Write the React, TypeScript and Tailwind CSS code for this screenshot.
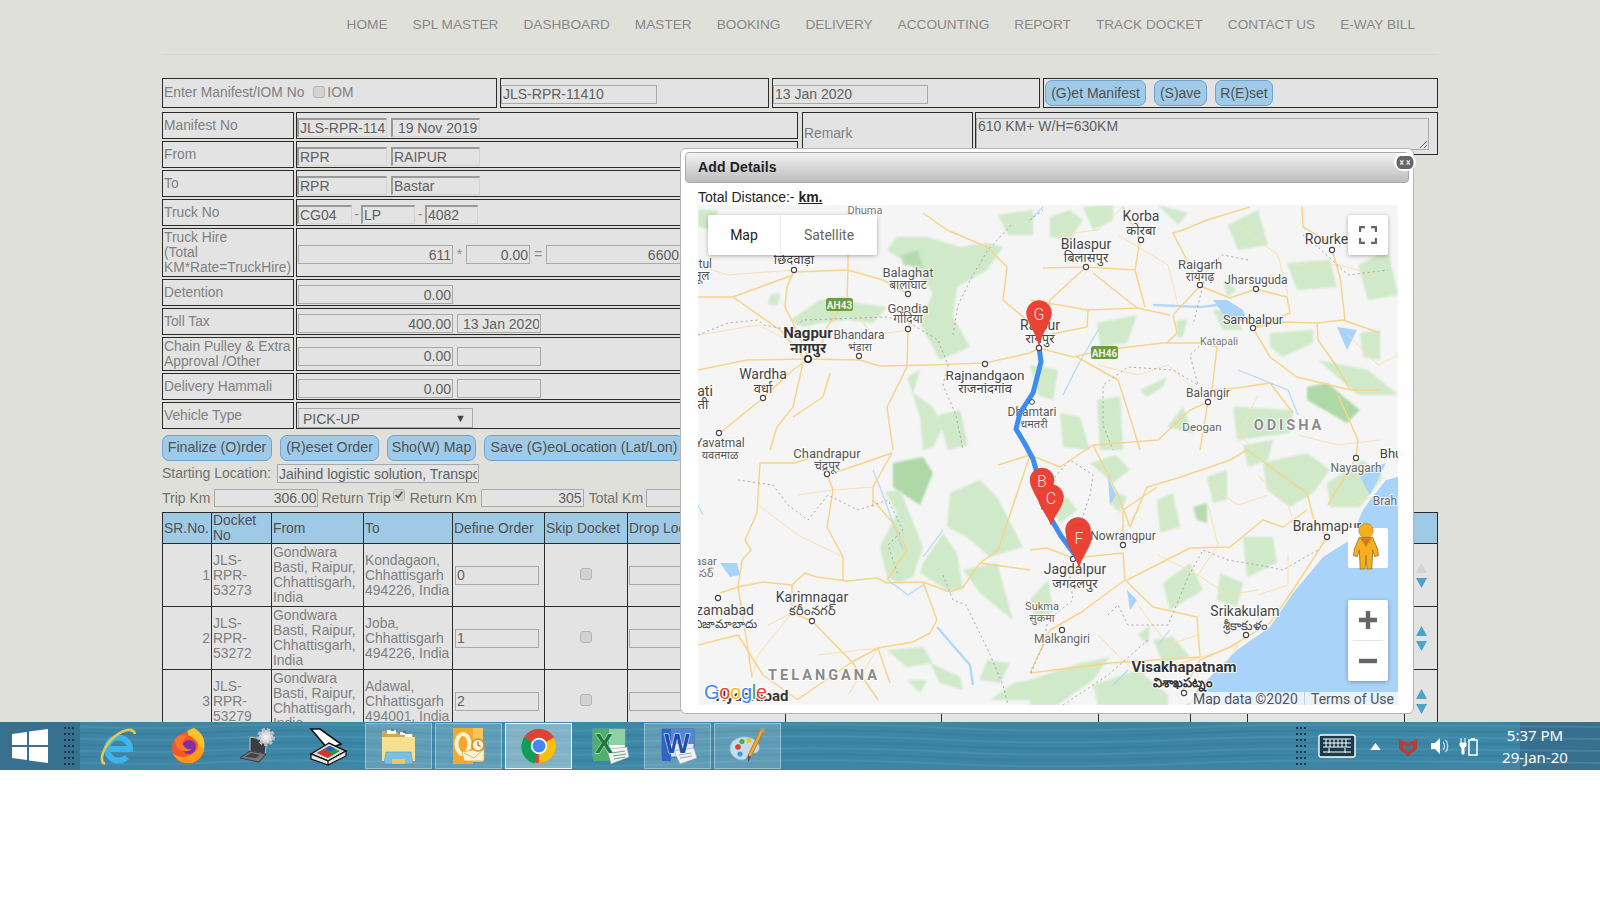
import React from "react";

const NAV = ["HOME","SPL MASTER","DASHBOARD","MASTER","BOOKING","DELIVERY","ACCOUNTING","REPORT","TRACK DOCKET","CONTACT US","E-WAY BILL"];

function Cell({ className = "", children }: { className?: string; children?: React.ReactNode }) {
  return <div className={"border border-[#2b2b2b] bg-[#e3e3e3] " + className}>{children}</div>;
}
function Inp({ v = "", w, right, inset, h = "h-[19px]", extra = "" }: { v?: string; w: string; right?: boolean; inset?: boolean; h?: string; extra?: string }) {
  return (
    <input readOnly value={v} className={`${w} ${h} ${extra} shrink-0 bg-[#e3e3e3] text-[#606060] text-[14px] leading-none px-[1px] outline-none ${right ? "text-right" : "text-left"} ${inset ? "pb-[1px] border-t-2 border-l-2 border-r border-b border-t-[#999] border-l-[#999] border-r-[#d4d4d4] border-b-[#d4d4d4]" : "border border-[#a9a9a9]"}`} />
  );
}
function Btn({ w, t = "text-[14px]", children }: { w: string; t?: string; children: React.ReactNode }) {
  return <button className={`${w} ${t} h-[26px] shrink-0 rounded-[7px] border border-[#6ea4d2] bg-[#9fcbe8] text-[#505050] whitespace-nowrap`}>{children}</button>;
}
function Check({ checked }: { checked?: boolean }) {
  return (
    <span className="inline-flex items-center justify-center w-[12px] h-[12px] rounded-[3px] border border-[#b5b5b5] bg-[#d2d2d2] shrink-0">
      {checked && <svg viewBox="0 0 12 12" className="w-[10px] h-[10px]"><path d="M2 6l3 3 5-7" fill="none" stroke="#555" strokeWidth="2" /></svg>}
    </span>
  );
}
function Row({ label, h = "h-[27px]", children }: { label: React.ReactNode; h?: string; children?: React.ReactNode }) {
  return (
    <div className={`flex gap-[2px] ${h}`}>
      <Cell className="w-[132px] shrink-0 flex items-center px-[1px] text-[#808080] text-[13.8px] leading-[15px] whitespace-nowrap"><div>{label}</div></Cell>
      <Cell className="w-[502px] flex items-center pt-[4px] pl-[1px] text-[#8a8a8a] text-[14px]">{children}</Cell>
    </div>
  );
}
const Tri = ({ up, c }: { up?: boolean; c: string }) => (
  <svg viewBox="0 0 10 9" className="w-[11px] h-[10px] block"><path d={up ? "M5 0l5 9H0z" : "M5 9l5-9H0z"} fill={c} /></svg>
);

const RD = [
  ["1","JLS-RPR-53273","Kondagaon, Chhattisgarh 494226, India","0","#d2d2d2","#4aa3c9"],
  ["2","JLS-RPR-53272","Joba, Chhattisgarh 494226, India","1","#4aa3c9","#4aa3c9"],
  ["3","JLS-RPR-53279","Adawal, Chhattisgarh 494001, India","2","#4aa3c9","#4aa3c9"],
];

/* ---------- map data ---------- */
const ROADS = [
  "0,165 49,155 109,154 162,155 182,161 232,160 287,158 332,148 341,143 375,152 406,145 465,138 502,138",
  "96,65 89,82 87,102 95,118 110,152","150,62 149,95 129,122 119,152","0,92 35,92 82,125 105,152","35,92 95,70",
  "95,67 150,65 185,75 209,88","150,5 150,62","225,8 249,25 289,42 309,62 305,95 332,118",
  "210,125 209,162 189,202 195,245","65,193 95,165 109,155","22,228 65,193","105,158 95,202 79,222 72,245","132,168 125,192 95,212",
  "388,62 352,95 341,142","388,62 437,65 442,35 425,2","345,63 388,62","395,68 439,103 472,110","437,65 447,102","332,95 390,105 439,103","390,105 389,122 349,130",
  "475,110 502,81 532,93 558,84 589,92 592,108 555,123","475,110 479,128 469,138","502,81 475,28 485,25 509,15 552,2",
  "501,138 519,142 514,185 510,197 502,245","555,123 585,117 619,118 645,115 682,128","555,123 572,152 599,172 652,185 682,185",
  "634,45 642,72 647,115","604,2 605,22 632,38","619,118 620,135 639,162 652,185","420,175 379,152","420,175 435,222 442,245","514,185 539,183 572,178 595,208",
  "194,248 139,267 129,269","62,258 97,258 115,252 159,248","62,258 59,308 47,335 53,345 44,355 40,382",
  "40,382 65,377 94,380 107,368 119,372 149,376 179,373 189,378 225,377 252,387 265,382 282,358 332,365",
  "225,377 239,415 232,428 215,437 180,443 154,457 99,495","129,269 135,285 129,322 145,352 145,375","175,295 195,318 209,345 189,375",
  "194,248 175,282 175,302","40,382 49,438 54,472","114,416 154,457 180,495","180,443 192,478","22,388 40,382","94,380 94,408 114,416",
  "332,345 349,343 375,353","375,353 425,348 427,375 455,402 499,412 502,452","425,342 425,305 459,282",
  "432,322 449,282 480,273 532,255 549,245 609,288 615,312 629,332","629,332 619,348 595,385 572,418 532,442 502,455 485,485",
  "492,343 532,342 565,315 585,322 609,305","492,343 429,375","427,375 382,408 352,425 332,468","332,468 412,458 502,452",
  "332,250 362,262 395,240 460,235 492,205 510,197","395,240 420,290 432,322","640,190 660,235 658,253 630,300","0,440 40,430 65,470 100,495","300,260 332,250 300,345 282,358",
];
const THIN = [
  "0,60 30,70 96,65","0,130 60,120 100,140","150,100 175,130 210,125","60,300 100,330 145,352","100,290 135,285 175,282","70,420 94,408 60,450 54,472",
  "120,450 180,443 150,490","360,30 400,25 425,2","400,160 440,170 470,160 510,197","560,190 540,230 560,245","600,230 640,240 682,235",
  "510,280 540,300 570,290","400,430 440,470 502,452","480,460 540,440 520,470","560,390 590,380 590,350","445,300 420,330","680,290 650,300",
  "460,350 500,370 530,390 560,385","440,400 470,440 500,430","510,300 520,340 500,370","560,270 590,300 600,330","420,30 470,60 480,100","540,20 580,50 590,90","650,130 680,160 700,150","600,60 640,60 680,70",
];
const BORDERS = [
  "0,130 30,118 60,115 66,120 92,125 105,115 160,113 190,112 215,120 240,135 250,160 245,180 258,210 265,245",
  "313,20 290,45 275,70 260,100 255,130","40,275 75,280 90,300 110,315 130,290 160,305 190,295 205,325 190,340 200,370",
  "245,370 255,395 268,400 285,435 290,445 305,480 310,500","332,15 345,5","350,280 372,255 395,270 392,290 382,320 372,370 375,395 350,415 345,440 332,470",
  "410,410 420,400 430,420 470,420 490,372 505,345 530,355 560,360 585,365 620,345","505,138 492,150 500,180 475,165 430,162 405,180 405,220 415,245",
  "550,55 525,50 510,60 495,120","605,30 620,42 650,70 690,65","365,500 410,470 450,435",
];
const GREEN: [string, string?][] = [
  ["229,32 262,42 289,38 305,42 289,65 259,82 255,112 272,142 242,155 222,118 235,88 215,62 189,45 199,32"],["204,50 220,45 225,62 205,60","#b5dcae"],
  ["92,115 122,95 145,92 159,98 189,102 175,118 149,115 122,118 105,122"],["209,172 222,165 215,188 235,202 245,222 235,242 225,245 222,212"],
  ["72,90 82,88 80,100 70,100"],["195,258 225,252 235,268 222,300 195,282","#aed9a6"],["187,287 202,285 225,342 215,372 199,378 189,372 182,342 199,308"],
  ["252,288 282,275 299,292 325,342 292,352 269,332 249,322"],["225,358 245,328 259,348 265,385 249,385 222,368"],["265,365 299,358 315,415 282,388"],
  ["189,445 225,442 235,458 209,462"],["209,475 229,475 222,488"],["232,458 262,472 265,485 242,478"],["289,455 312,458 302,478 282,475"],["315,478 332,475 332,495 292,495"],
  ["332,475 382,458 412,452 395,475 359,500 332,500"],["455,435 475,432 492,452 465,458"],["412,285 429,292 422,308 412,298"],["459,295 475,288 482,322 462,328"],
  ["495,302 509,298 509,318 499,315","#b5dcae"],["509,272 529,265 529,295 515,298"],["545,332 575,332 579,358 549,372"],["465,378 492,358 505,385 472,405"],
  ["522,368 545,378 539,402 519,395"],["565,258 609,248 632,265 615,288 592,302 569,285"],["629,278 665,255 685,272 662,302 632,302"],["352,298 369,292 379,305 362,318"],
  ["352,12 372,5 385,15 372,35 352,32"],["385,2 415,0 415,15 395,25"],["399,118 439,110 429,138 402,142"],["479,115 489,115 485,132 479,132"],["525,75 539,85 529,92"],
  ["515,105 532,105 545,125 525,125"],["589,58 632,55 639,82 599,85"],["572,128 615,125 615,138 585,152 572,142"],["609,182 629,178 662,205 649,218 609,195","#aed9a6"],
  ["535,202 595,205 592,228 539,235"],["662,128 682,125 682,155 665,152"],["399,195 422,192 425,245 402,245"],["362,208 382,212 392,245 365,242"],["469,222 485,202 495,228"],
  ["442,185 469,172 465,182 449,192"],["392,258 415,278 432,265 418,250"],["300,10 335,5 335,30 310,30"],["0,5 20,5 15,25 0,22"],["440,430 452,420 450,440"],["660,60 690,45 700,90 670,95"],
  ["620,155 670,165 700,190 660,190"],["460,0 490,8 480,20"],["530,20 560,5 570,40 540,45"],["332,395 350,375 355,405 340,420"],["332,160 360,165 355,195 340,190"],
  ["240,210 262,205 270,240 250,245"],["545,240 575,235 570,255 550,262"],["395,480 440,465 470,490 470,500 400,500"],
];
const LABELS: [string, number, number, number?, number?, string?][] = [
  ["Dhuma",167,5,11,400,"#777"],["Balaghat",210,67,13,400,"#555"],["बालाघाट",210,80,12,400,"#555"],["Gondia",210,103,13,400,"#555"],["गोंदिया",210,114,12,400,"#555"],
  ["Nagpur",110,128,15,700,"#333"],["नागपुर",110,143,14,700,"#333"],["Bhandara",161,130,12,400,"#555"],["भंडारा",162,142,11,400,"#555"],
  ["Wardha",65,169,14,400,"#444"],["वर्धा",65,183,13,400,"#444"],["Rajnandgaon",287,170,13.5,400,"#444"],["राजनांदगांव",287,183,13,400,"#444"],
  ["छिंदवाड़ा",96,54,13,400,"#444"],["etul",4,59,12,400,"#555"],["तूल",4,71,12,400,"#555"],["ati",7,186,14,400,"#444"],["ती",5,199,13,400,"#444"],
  ["Yavatmal",22,238,12,400,"#555"],["यवतमाळ",22,250,11,400,"#555"],["Chandrapur",129,248,13,400,"#555"],["चंद्रपूर",129,261,12,400,"#555"],
  ["Raipur",342,120,14,400,"#444"],["रायपुर",342,133,13,400,"#444"],
  ["Dhamtari",334,207,12,400,"#555"],["धमतरी",336,219,11,400,"#555"],["Korba",443,11,14,400,"#444"],["कोरबा",443,25,13,400,"#444"],
  ["Bilaspur",388,39,14,400,"#444"],["बिलासपुर",388,52,13,400,"#444"],["Raigarh",502,59,13,400,"#555"],["रायगढ़",502,72,12,400,"#555"],
  ["Jharsuguda",558,75,12,400,"#555"],["Sambalpur",555,114,12.5,400,"#444"],["Katapali",521,136,10.5,400,"#777"],["Balangir",510,188,12,400,"#555"],["Deogan",504,222,11.5,400,"#666"],
  ["Rourkela",634,34,14,400,"#444"],["zamabad",27,405,14,400,"#444"],["నిజామాబాదు",27,419,12,400,"#444"],["asar",8,356,11,400,"#666"],["సర్",8,368,11,400,"#666"],
  ["Karimnagar",114,392,14,400,"#444"],["కరీంనగర్",114,405,13,400,"#444"],["Nowrangpur",425,331,12,400,"#555"],["Jagdalpur",377,364,14,400,"#444"],["जगदलपुर",377,378,13,400,"#444"],
  ["Sukma",344,401,11,400,"#666"],["सुकमा",344,413,11,400,"#666"],["Malkangiri",364,434,12,400,"#666"],["Srikakulam",547,406,14,400,"#444"],["శ్రీకాకుళం",547,420,13,400,"#444"],
  ["Visakhapatnam",486,462,15,700,"#333"],["విశాఖపట్నం",485,477,13,700,"#333"],["Brahmapur",629,321,14,400,"#444"],["Nayagarh",658,263,12,400,"#666"],["Brah",687,296,12,400,"#666"],["Bhu",693,248,13,400,"#444"],
  ["Hyderabad",54,491,15,700,"#333"],
];
const DOTS: [number, number][] = [[210,89],[210,124],[161,151],[65,193],[287,159],[96,65],[21,228],[129,269],[443,35],[388,62],[502,80],[558,84],[555,123],[510,197],[634,45],[20,393],[114,416],[425,340],[375,354],[364,425],[548,430],[486,488],[629,332],[658,253]];

function Pin({ x, y, tip, r = 12, l }: { x: number; y: number; tip: number; r?: number; l: string }) {
  return (
    <g>
      <path d={`M${x} ${tip}C${x - 2} ${y + r + 8} ${x - r} ${y + r * 0.75} ${x - r} ${y}A${r} ${r} 0 1 1 ${x + r} ${y}C${x + r} ${y + r * 0.75} ${x + 2} ${y + r + 8} ${x} ${tip}Z`} fill="#ea4335" stroke="#d23a2d" strokeWidth="0.5" />
      {l && <text x={x} y={y + 1} fontSize="16" fontWeight="300" fill="#f9dcd8" textAnchor="middle" dominantBaseline="central" fontFamily="Roboto, sans-serif">{l}</text>}
    </g>
  );
}

function MapArt() {
  return (
    <svg viewBox="0 0 700 500" className="absolute inset-0 w-[700px] h-[500px]">
      <defs><filter id="soft"><feGaussianBlur stdDeviation="0.8" /></filter></defs>
      <rect width="700" height="500" fill="#f5f5f5" />
      <g filter="url(#soft)">
        {GREEN.map(([p, c], i) => <polygon key={i} points={p} fill={c || "#cfe9c9"} />)}
      </g>
      <polygon points="700,272 688,275 672,295 665,305 652,335 625,352 595,388 572,422 539,445 499,485 489,500 700,500" fill="#a9d3f9" />
      {["515,95 529,95 545,105 549,115 532,118","639,122 659,125 649,145","22,358 39,358 42,370 32,372","429,385 439,395 432,405","410,272 418,290 412,300","662,272 676,262 688,258 672,290"].map((p, i) => <polygon key={i} points={p} fill="#a9d3f9" />)}
      {["455,100 502,102 520,100","239,422 272,460 275,480","190,375 210,390 225,380","225,352 245,325","460,440 472,425","332,15 345,2","540,165 590,185 600,210","0,300 5,310","205,345 185,290 175,265","400,125 380,160 365,190","415,480 430,465"].map((p, i) => <polyline key={i} points={p} fill="none" stroke="#b4d9f7" strokeWidth={i < 2 ? 2.5 : 1.2} />)}
      {THIN.map((p, i) => <polyline key={i} points={p} fill="none" stroke="#f9e2ae" strokeWidth="1" />)}
      {ROADS.map((p, i) => <polyline key={i} points={p} fill="none" stroke="#f8d48a" strokeWidth="1.5" strokeLinejoin="round" />)}
      {BORDERS.map((p, i) => <polyline key={i} points={p} fill="none" stroke="#a8a8a8" strokeWidth="1" strokeDasharray="2 3" />)}
      <g>
        <rect x="128" y="93" width="27" height="13" rx="2.5" fill="#6a9d3e" />
        <text x="141.5" y="100" fontSize="10" fontWeight="700" fill="#eef5e5" textAnchor="middle" dominantBaseline="central" fontFamily="Roboto, sans-serif">AH43</text>
        <rect x="393" y="141" width="27" height="13" rx="2.5" fill="#6a9d3e" />
        <text x="406.5" y="148" fontSize="10" fontWeight="700" fill="#eef5e5" textAnchor="middle" dominantBaseline="central" fontFamily="Roboto, sans-serif">AH46</text>
      </g>
      {DOTS.map(([x, y], i) => <circle key={i} cx={x} cy={y} r="2.6" fill="#fff" stroke="#444" strokeWidth="1.1" />)}
      <circle cx="110" cy="154" r="3.2" fill="#fff" stroke="#222" strokeWidth="1.6" />
      <text x="591" y="220" fontSize="14.5" fontWeight="700" letterSpacing="3" fill="#8a8a8a" stroke="#fff" strokeWidth="2" paintOrder="stroke" textAnchor="middle" dominantBaseline="central" fontFamily="Roboto, sans-serif">ODISHA</text>
      <text x="126" y="470" fontSize="14.5" fontWeight="700" letterSpacing="3" fill="#8a8a8a" stroke="#fff" strokeWidth="2" paintOrder="stroke" textAnchor="middle" dominantBaseline="central" fontFamily="Roboto, sans-serif">TELANGANA</text>
      {LABELS.map(([t, x, y, s = 13, w = 400, c = "#555"], i) => (
        <text key={i} x={x} y={y} fontSize={s} fontWeight={w} fill={c} stroke="#fff" strokeWidth="2" strokeOpacity="0.8" paintOrder="stroke" textAnchor="middle" dominantBaseline="central" fontFamily="Roboto, 'Noto Sans', sans-serif">{t}</text>
      ))}
      <polyline points="341,142 343,157 335,188 322,208 318,224 327,239 335,254 341,275 348,305 363,331 380,354" fill="none" stroke="#3d8cf0" strokeWidth="5" strokeLinejoin="round" strokeLinecap="round" />
      <circle cx="341" cy="143" r="2.6" fill="#fff" stroke="#444" strokeWidth="1.1" />
      <circle cx="334" cy="197" r="2.4" fill="#fff" stroke="#444" strokeWidth="1" />
      <Pin x={341} y={108} tip={141} r={12.5} l="G" />
      <Pin x={344} y={275} tip={305} r={12} l="B" />
      <Pin x={353} y={292} tip={320} r={12.5} l="C" />
      <Pin x={380} y={325} tip={358} r={12.5} l="" />
      <Pin x={381} y={332} tip={363} r={12.5} l="F" />
      <text x="6" y="494" fontSize="20" fontWeight="500" stroke="#fff" strokeWidth="2.5" paintOrder="stroke" fontFamily="'Liberation Sans', sans-serif" letterSpacing="-0.3">
        <tspan fill="#4285f4">G</tspan><tspan fill="#ea4335">o</tspan><tspan fill="#fbbc05">o</tspan><tspan fill="#4285f4">g</tspan><tspan fill="#34a853">l</tspan><tspan fill="#ea4335">e</tspan>
      </text>
    </svg>
  );
}

function MapBox() {
  return (
    <div className="relative w-[700px] h-[500px] ml-[13px] overflow-hidden [font-family:Roboto,sans-serif]">
      <MapArt />
      <div className="absolute left-[10px] top-[10px] w-[169px] h-[40px] flex bg-white rounded-[2px] shadow-[0_1px_4px_rgba(0,0,0,0.3)] text-[14px]">
        <div className="w-[73px] flex items-center justify-center text-[#222] border-r border-[#eee]">Map</div>
        <div className="flex-1 flex items-center justify-center text-[#666]">Satellite</div>
      </div>
      <div className="absolute left-[650px] top-[10px] w-[40px] h-[40px] bg-white rounded-[2px] shadow-[0_1px_4px_rgba(0,0,0,0.3)] flex items-center justify-center">
        <svg viewBox="0 0 18 18" className="w-[18px] h-[18px]"><path d="M1 6V1h5M12 1h5v5M17 12v5h-5M6 17H1v-5" fill="none" stroke="#666" strokeWidth="2.4" /></svg>
      </div>
      <div className="absolute left-[650px] top-[323px] w-[40px] h-[40px] bg-white rounded-[2px]" />
      <svg viewBox="0 0 30 50" className="absolute left-[653px] top-[317px] w-[30px] h-[48px]">
        <circle cx="15" cy="9" r="7.5" fill="#f6b01e" stroke="#a67a1c" strokeWidth="0.6" />
        <path d="M8 16h14l5 12 1 7-4 1-2-7-1 20h-5l-1-14-1 14H9L8 29l-2 7-4-1 1-7z" fill="#f6b01e" stroke="#8b6a20" strokeWidth="0.8" />
        <path d="M9 17h12l-6 9z" fill="#d9781f" />
      </svg>
      <div className="absolute left-[650px] top-[395px] w-[40px] h-[81px] bg-white rounded-[2px] shadow-[0_1px_4px_rgba(0,0,0,0.3)] flex flex-col items-center">
        <div className="h-[40px] flex items-center justify-center">
          <svg viewBox="0 0 18 18" className="w-[18px] h-[18px]"><path d="M9 0v18M0 9h18" stroke="#666" strokeWidth="4.4" /></svg>
        </div>
        <div className="w-[30px] h-px bg-[#e6e6e6]" />
        <div className="h-[40px] flex items-center justify-center">
          <svg viewBox="0 0 18 18" className="w-[18px] h-[18px]"><path d="M0 9h18" stroke="#666" strokeWidth="4.4" /></svg>
        </div>
      </div>
      <div className="absolute left-[491px] top-[487px] w-[209px] h-[13px] bg-[rgba(255,255,255,0.72)] flex items-center text-[#555] text-[14px] leading-none whitespace-nowrap">
        <span className="pl-[4px] w-[115px]">Map data ©2020</span>
        <span className="border-l border-[#ccc] pl-[6px] h-[13px] flex items-center">Terms of Use</span>
      </div>
    </div>
  );
}

function Grip() {
  return <div className="grid grid-cols-3 gap-x-[2px] gap-y-[4px] w-[10px]">{Array.from({ length: 21 }).map((_, i) => <span key={i} className="w-[2px] h-[2px] bg-[#1d3443]" />)}</div>;
}
const Tile = ({ children, on }: { children: React.ReactNode; on?: boolean }) => (
  <div className={`w-[67px] h-[46px] mr-[3px] shrink-0 flex items-center justify-center border ${on ? "bg-[rgba(255,255,255,0.36)] border-[rgba(255,255,255,0.9)]" : "bg-[rgba(255,255,255,0.18)] border-[rgba(255,255,255,0.36)]"}`}>{children}</div>
);
const Plain = ({ children, w = "w-[70px]" }: { children: React.ReactNode; w?: string }) => <div className={`${w} h-[45px] shrink-0 flex items-center justify-center`}>{children}</div>;

const Waves = () => (
  <svg viewBox="0 0 1600 48" preserveAspectRatio="none" className="absolute inset-0 w-[1600px] h-[48px]">
    {[5,11,17,23,29,35,41].map((y, i) => (
      <path key={y} d={`M0 ${y}c60 -4 120 4 200 0s160 -3 240 1 180 3 260 -1 170 -3 250 1 150 3 250 -1 180 -2 400 0`} fill="none" stroke={i % 2 ? "#2f7596" : "#59a0bb"} strokeOpacity="0.35" strokeWidth="2" />
    ))}
  </svg>
);

function Taskbar() {
  return (
    <div className="relative h-[48px] overflow-hidden bg-[linear-gradient(90deg,#3f82a2,#3d89a8_30%,#3c84a4_70%,#3d87a6_95%,#386f8c_95%)] [font-family:'Noto_Sans',sans-serif]">
      <Waves />
      <div className="relative h-full flex items-center">
        <div className="w-[80px] h-full shrink-0 flex items-center bg-[#37718f] pl-[12px] gap-[16px]">
          <svg viewBox="0 0 36 36" className="w-[36px] h-[36px]"><path d="M0 6l15-2v13H0zM17 3.6L36 1v16H17zM0 19h15v13L0 30zM17 19h19v16l-19-2.6z" fill="#fff" /></svg>
          <Grip />
        </div>
        <Plain w="w-[76px]">
          <svg viewBox="0 0 40 40" className="w-[40px] h-[40px]">
            <path d="M9 23h23a11.5 11.5 0 1 0-3.2 8" fill="none" stroke="#3fb4ea" strokeWidth="6" />
            <path d="M37 8C35 1 24 3 13 14 4 24 1 36 7 38" fill="none" stroke="#e9c64a" strokeWidth="2.6" />
          </svg>
        </Plain>
        <Plain w="w-[64px]">
          <svg viewBox="0 0 40 40" className="w-[40px] h-[40px]">
            <circle cx="20" cy="22" r="16" fill="#f5562a" />
            <path d="M19 5c3-2 5-2 7-3 8 4 12 12 10 21-1 7-7 13-14 14 7-5 10-12 8-19-2-5-6-7-10-9 0-2 0-3-1-4z" fill="#ffc22c" />
            <path d="M36 23c-1 8-8 14-16 14-7 0-13-4-15-10 4 4 10 5 15 3 6-2 10-6 10-12z" fill="#ff9a1f" />
            <circle cx="21" cy="21" r="7" fill="#7d2fa8" />
            <path d="M7 13c4-4 9-5 13-3-3 2-6 5-5 8 1 4 5 6 9 5-3 3-9 3-13 0-3-2-4-6-4-10z" fill="#f9772a" />
          </svg>
        </Plain>
        <Plain w="w-[78px]">
          <svg viewBox="0 0 40 40" className="w-[40px] h-[40px]">
            <path d="M11 11l17 3-2 14-15-3z" fill="#3a3f44" stroke="#c5c5c5" />
            <path d="M1 32l10-7 16 3-7 8z" fill="#777" stroke="#3a3a3a" />
            <path d="M6 31l6-4 9 2-4 3z" fill="#444" />
            <circle cx="27" cy="11" r="7" fill="#dcdcdc" stroke="#bdbdbd" strokeWidth="4" strokeDasharray="3 1.8" />
            <circle cx="27" cy="11" r="2.6" fill="#f2f2f2" />
          </svg>
        </Plain>
        <Plain w="w-[60px]">
          <svg viewBox="0 0 40 40" className="w-[40px] h-[40px]">
            <path d="M3 3h9l21 15-13 5z" fill="#fff" stroke="#111" strokeWidth="1.6" />
            <path d="M3 28l18-11 17 8-18 10z" fill="#d8d8d8" stroke="#111" strokeWidth="1.4" />
            <path d="M9 27l12-7 11 5-12 7z" fill="#1d9e44" />
            <path d="M9 27l7-4 9 5.4-6 3z" fill="#d6342c" />
            <path d="M17 22.6l5-2.6 5 2.6-5 3z" fill="#2f53d0" />
            <path d="M3 28v5l17 6v-4zM20 35l18-10v5L20 39z" fill="#e6e6e6" stroke="#111" strokeWidth="1.2" />
          </svg>
        </Plain>
        <div className="w-[7px] shrink-0" />
        <Tile>
          <svg viewBox="0 0 40 40" className="w-[40px] h-[40px]">
            <path d="M3 5h14l3 3h14v18H3z" fill="#c9a95a" />
            <path d="M8 4h9v4H8z" fill="#fff" /><path d="M12 3h3v2h-3z" fill="#3c9a55" /><path d="M21 6h5v3h-5z" fill="#fff" /><path d="M24 5h3v2h-3z" fill="#cc4a3c" />
            <path d="M26 8h7v4h-7z" fill="#fff" />
            <path d="M3 11h33v24H3z" fill="#f6e08f" />
            <path d="M7 26h25l2 12H5z" fill="#79c0e4" stroke="#4e9ac2" strokeWidth="0.6" />
            <rect x="13" y="33" width="13" height="5" fill="#e8c95c" />
          </svg>
        </Tile>
        <Tile>
          <svg viewBox="0 0 40 40" className="w-[40px] h-[40px]">
            <path d="M4 2h30v34H4z" fill="#f7c65a" />
            <path d="M4 2h20v36H4z" fill="#f4a92c" />
            <ellipse cx="14" cy="18" rx="6.5" ry="10" fill="none" stroke="#fff3d0" strokeWidth="4" />
            <path d="M13 26l22-4v13H15z" fill="#fdf2d5" stroke="#d5a44a" strokeWidth="0.8" />
            <path d="M15 27l10 5 10-9" fill="none" stroke="#e2b765" />
            <circle cx="29" cy="19" r="6" fill="#fff5d5" stroke="#cf8f2a" strokeWidth="1.6" />
            <path d="M29 15.5V19l2.5 1.5" fill="none" stroke="#b76a12" strokeWidth="1.2" />
          </svg>
        </Tile>
        <Tile on>
          <svg viewBox="0 0 40 40" className="w-[38px] h-[38px]">
            <circle cx="20" cy="20" r="18" fill="#db4437" />
            <path d="M20 20L35.6 11A18 18 0 0 1 20 38z" fill="#f4c20d" />
            <path d="M20 20l-5 18.4A18 18 0 0 1 4.4 11z" fill="#0f9d58" />
            <path d="M20 2a18 18 0 0 1 15.6 9H20zM4.4 11A18 18 0 0 1 20 2v9z" fill="#db4437" />
            <circle cx="20" cy="20" r="8.6" fill="#fff" />
            <circle cx="20" cy="20" r="6.8" fill="#4285f4" />
          </svg>
        </Tile>
        <Plain w="w-[69px]">
          <svg viewBox="0 0 40 40" className="w-[40px] h-[40px]">
            <path d="M3 3h32v28H3z" fill="#fff" stroke="#7bb68f" strokeWidth="0.8" />
            <path d="M3 3h32v16H3z" fill="#8fd0a2" />
            <path d="M3 3h16v32H3z" fill="#4eae70" />
            <path d="M17 23l20-2 2 10-18 7z" fill="#f2f2f2" stroke="#99a" strokeWidth="0.6" />
            <path d="M22 27l13-2M23 30l13-2M24 33l11-2" stroke="#6fa380" strokeWidth="1.1" />
            <text x="14" y="27" fontSize="27" fontWeight="700" fill="#1d7a3f" textAnchor="middle" fontFamily="'Liberation Sans', sans-serif" stroke="#dff3e4" strokeWidth="0.8" paintOrder="stroke">X</text>
          </svg>
        </Plain>
        <Tile>
          <svg viewBox="0 0 40 40" className="w-[40px] h-[40px]">
            <path d="M4 3h32v28H4z" fill="#dfe8f7" stroke="#3d5fa8" strokeWidth="0.8" />
            <path d="M4 3h32v15H4z" fill="#5585d8" />
            <path d="M4 3h9v32H4z" fill="#2f63c4" />
            <path d="M16 25l20-3 3 10-17 6z" fill="#f4f4f8" stroke="#99a" strokeWidth="0.6" />
            <path d="M21 29l12-2M22 32l12-2" stroke="#8aa" strokeWidth="1" />
            <text x="19" y="27" fontSize="27" fontWeight="700" fill="#1f4fa8" textAnchor="middle" fontFamily="'Liberation Sans', sans-serif" stroke="#fff" strokeWidth="1" paintOrder="stroke">W</text>
          </svg>
        </Tile>
        <Tile>
          <svg viewBox="0 0 40 40" className="w-[40px] h-[40px]">
            <path d="M2 24c-1-9 8-14 17-13 8 1 14 7 12 13-2 5-7 2-10 4-3 3-2 6-7 6-5 0-11-4-12-10z" fill="#c5dceb" stroke="#8fb3c9" strokeWidth="0.8" />
            <circle cx="10" cy="21" r="2.8" fill="#d8412f" /><circle cx="14" cy="15.5" r="2.6" fill="#3fb24f" /><circle cx="21" cy="14.5" r="2.6" fill="#e8c72e" /><circle cx="12" cy="28" r="2.6" fill="#3d9be0" />
            <path d="M35 6l-12 25-3-1.5L32 4z" fill="#e8a73c" stroke="#b9731f" strokeWidth="0.8" />
            <path d="M32 4l3-3 2 5-2 1z" fill="#c7965a" />
            <path d="M20 29.5l3 1.5-3 5z" fill="#555" />
          </svg>
        </Tile>

        <div className="ml-auto flex items-center h-full pr-[30px]">
          <Grip />
          <svg viewBox="0 0 38 24" className="w-[38px] h-[24px] ml-[12px]">
            <rect x="1" y="1" width="36" height="22" rx="2" fill="#183a4a" stroke="#fff" strokeWidth="1.4" />
            <path d="M5 5h28M5 9h28M5 13h28M8 5v8M12 5v8M16 5v8M20 5v8M24 5v8M28 5v8M5 18h28M11 14v5M27 14v5" stroke="#fff" strokeWidth="1" fill="none" />
          </svg>
          <svg viewBox="0 0 12 8" className="w-[11px] h-[7px] ml-[14px]"><path d="M6 0l6 8H0z" fill="#fff" /></svg>
          <svg viewBox="0 0 20 20" className="w-[20px] h-[20px] ml-[17px]"><path d="M1 3l9 4 9-4v10l-9 7-9-7z" fill="#c03a33" /><path d="M5 8l5 2.4L15 8v4l-5 3.5L5 12z" fill="#3b7b98" /></svg>
          <svg viewBox="0 0 20 20" className="w-[20px] h-[20px] ml-[11px]"><path d="M2 7h4l5-5v16l-5-5H2z" fill="#fff" /><path d="M14 6c2 2 2 6 0 8M16.5 4c3 3 3 9 0 12" fill="none" stroke="#cde" strokeWidth="1.2" /></svg>
          <svg viewBox="0 0 20 20" className="w-[20px] h-[20px] ml-[10px]"><path d="M2 2v5M6 2v5M1 7h6v3l-2 2v6H3v-6l-2-2z" fill="#fff" stroke="#fff" /><rect x="10" y="4" width="8" height="15" fill="none" stroke="#fff" strokeWidth="1.5" /><rect x="12" y="2" width="4" height="2" fill="#fff" /></svg>
          <div className="w-[70px] ml-[21px] flex flex-col items-center text-white text-[15px] leading-[22px]">
            <span>5:37 PM</span><span>29-Jan-20</span>
          </div>
        </div>
      </div>
    </div>
  );
}

export default function App() {
  return (
    <div className="w-[1600px] h-[900px] overflow-hidden bg-white [font-family:'Liberation_Sans',Arial,sans-serif]">
      <div className="relative h-[722px] overflow-hidden bg-[#e0e0da]">
        <div className="w-[1276px] mx-auto">
          <div className="h-[55px] border-b border-[#d7d7d1] flex items-center justify-end gap-[25px] pr-[23px] pb-[4px] text-[13.65px] text-[#888]">
            {NAV.map((n) => <span key={n}>{n}</span>)}
          </div>

          <div className="flex gap-[3px] mt-[23px] h-[30px]">
            <Cell className="w-[335px] flex items-center px-[1px] pt-[1px] text-[13.8px] text-[#808080]">
              <span>Enter Manifest/IOM No</span><span className="ml-[9px] -mt-[4px] flex"><Check /></span><span className="ml-[2px]">IOM</span>
            </Cell>
            <Cell className="w-[269px] flex items-center pt-[2px]"><Inp v="JLS-RPR-11410" w="w-[156px]" /></Cell>
            <Cell className="w-[268px] flex items-center pt-[2px]"><Inp v="13 Jan 2020" w="w-[155px]" /></Cell>
            <Cell className="w-[395px] flex items-center gap-[8px] pl-[1px]">
              <Btn w="w-[101px]">(G)et Manifest</Btn><Btn w="w-[53px]">(S)ave</Btn><Btn w="w-[58px]">R(E)set</Btn>
            </Cell>
          </div>

          <div className="flex gap-[4px] mt-[4px] items-start">
            <div className="w-[636px] flex flex-col gap-[2px] shrink-0">
              <Row label="Manifest No"><Inp v="JLS-RPR-114" w="w-[90px]" inset extra="-ml-[1px]" /><Inp v=" 19 Nov 2019" w="w-[89px] ml-[4px]" inset /></Row>
              <Row label="From"><Inp v="RPR" w="w-[90px]" inset extra="-ml-[1px]" /><Inp v="RAIPUR" w="w-[89px] ml-[4px]" inset /></Row>
              <Row label="To"><Inp v="RPR" w="w-[90px]" inset extra="-ml-[1px]" /><Inp v="Bastar" w="w-[89px] ml-[4px]" inset /></Row>
              <Row label="Truck No"><Inp v="CG04" w="w-[55px]" inset extra="-ml-[1px]" /><span className="w-[9px] text-center">-</span><Inp v="LP" w="w-[54px]" inset /><span className="w-[10px] text-center">-</span><Inp v="4082" w="w-[53px]" inset /></Row>
              <Row h="h-[49px]" label={<>Truck Hire<br />(Total<br />KM*Rate=TruckHire)</>}>
                <Inp v="611" w="w-[155px]" right /><span className="w-[13px] text-center">*</span><Inp v="0.00" w="w-[64px]" right /><span className="w-[16px] text-center">=</span><Inp v="6600" w="w-[135px]" right />
              </Row>
              <Row label="Detention"><Inp v="0.00" w="w-[155px]" right /></Row>
              <Row label="Toll Tax"><Inp v="400.00" w="w-[155px]" right /><Inp v=" 13 Jan 2020" w="w-[84px] ml-[4px]" /></Row>
              <Row h="h-[34px]" label={<>Chain Pulley &amp; Extra<br />Approval /Other</>}><Inp v="0.00" w="w-[155px]" right /><Inp w="w-[84px] ml-[4px]" /></Row>
              <Row label="Delivery Hammali"><Inp v="0.00" w="w-[155px]" right /><Inp w="w-[84px] ml-[4px]" /></Row>
              <Row label="Vehicle Type">
                <div className="relative w-[175px] h-[20px]">
                  <select disabled defaultValue="PICK-UP" className="appearance-none w-full h-full border border-[#a9a9a9] bg-[#e3e3e3] text-[#606060] text-[14px] pl-[4px] pb-[2px] opacity-100">
                    <option>PICK-UP</option>
                  </select>
                  <span className="absolute right-[7px] top-[2px] text-[11px] text-[#444]">▼</span>
                </div>
              </Row>
            </div>
            <div className="flex gap-[2px] h-[43px] flex-1">
              <Cell className="w-[171px] flex items-center px-[1px] pt-[2px] text-[13.8px] text-[#808080]">Remark</Cell>
              <Cell className="flex-1 pt-[5px]">
                <textarea readOnly value="610 KM+ W/H=630KM" className="block w-[453px] h-[32px] resize border border-[#a9a9a9] bg-[#e3e3e3] text-[14px] text-[#606060] leading-[15px] px-[1px] outline-none" />
              </Cell>
            </div>
          </div>

          <div className="flex gap-[8px] mt-[6px]">
            <Btn w="w-[110px]" t="text-[14.2px]">Finalize (O)rder</Btn><Btn w="w-[99px]" t="text-[14.2px]">(R)eset Order</Btn><Btn w="w-[89px]" t="text-[14.2px]">Sho(W) Map</Btn><Btn w="w-[200px]" t="text-[14.2px]">Save (G)eoLocation (Lat/Lon)</Btn>
          </div>
          <div className="flex items-center mt-[3px] h-[19px] text-[14px] text-[#707070]">
            <span>Starting Location:</span>
            <Inp v="Jaihind logistic solution, Transport Nagar, Raipur" w="w-[202px] ml-[6px]" />
          </div>
          <div className="flex items-center mt-[6px] h-[18px] text-[14px] text-[#707070]">
            <span>Trip Km</span>
            <Inp v="306.00" h="h-[18px]" w="w-[104px] ml-[4px]" right />
            <span className="ml-[3px]">Return Trip</span>
            <span className="ml-[2px] -mt-[6px] flex"><Check checked /></span>
            <span className="ml-[5px]">Return Km</span>
            <Inp v="305" h="h-[18px]" w="w-[103px] ml-[4px]" right />
            <span className="ml-[5px]">Total Km</span>
            <Inp h="h-[18px]" w="w-[104px] ml-[3px]" right />
          </div>

          <table className="mt-[5px] w-[1275px] table-fixed border-collapse text-[13.9px] leading-[15px]">
            <colgroup>
              {["w-[49px]","w-[60px]","w-[92px]","w-[89px]","w-[92px]","w-[83px]","w-[158px]","w-[156px]","w-[157px]","w-[92px]","w-[57px]","w-[157px]","w-[33px]"].map((c, i) => <col key={i} className={c} />)}
            </colgroup>
            <thead>
              <tr className="h-[30px] bg-[#9ecae6] text-[#505050]">
                {["SR.No.","Docket No","From","To","Define Order","Skip Docket","Drop Location","","","","","",""].map((h, i) => (
                  <th key={i} className="border border-[#2b2b2b] px-[1px] font-normal text-left align-middle whitespace-normal">{h === "Drop Location" ? <span className="whitespace-nowrap">{h}</span> : h}</th>
                ))}
              </tr>
            </thead>
            <tbody>
              {RD.map((r) => (
                <tr key={r[0]} className="h-[63px] bg-[#e3e3e3] text-[#808080]">
                  <td className="border border-[#2b2b2b] px-[1px] text-right">{r[0]}</td>
                  <td className="border border-[#2b2b2b] px-[1px]">{r[1]}</td>
                  <td className="border border-[#2b2b2b] px-[1px]">Gondwara Basti, Raipur, Chhattisgarh, India</td>
                  <td className="border border-[#2b2b2b] px-[1px]">{r[2]}</td>
                  <td className="border border-[#2b2b2b] px-[1px]"><Inp v={r[3]} w="w-[84px] ml-[1px]" /></td>
                  <td className="border border-[#2b2b2b] text-center"><span className="inline-flex -mt-[8px]"><Check /></span></td>
                  <td className="border border-[#2b2b2b] px-[1px]"><Inp w="w-[150px]" /></td>
                  <td className="border border-[#2b2b2b]" /><td className="border border-[#2b2b2b]" /><td className="border border-[#2b2b2b]" /><td className="border border-[#2b2b2b]" /><td className="border border-[#2b2b2b]" />
                  <td className="border border-[#2b2b2b]">
                    <div className="flex flex-col items-center gap-[5px]"><Tri up c={r[4]} /><Tri c={r[5]} /></div>
                  </td>
                </tr>
              ))}
            </tbody>
          </table>
        </div>

        <div className="absolute left-[680px] top-[148px] w-[734px] h-[566px] bg-white rounded-[6px] border border-[#b5b5b5] pt-[3px] px-[4px] text-[14px] text-[#222]">
          <div className="h-[31px] rounded-[4px] border border-[#aaa] bg-[linear-gradient(#f2f2f2,#bdbdbd)] flex items-center pl-[12px] font-bold text-[#222] tracking-[0.15px]">Add Details</div>
          <div className="h-[22px] pt-[6px] pl-[13px] flex items-center">Total Distance:-&nbsp;<b className="underline">km.</b></div>
          <MapBox />
          <span className="absolute right-[-3px] top-[4px] w-[22px] h-[18px] rounded-full bg-white flex items-center justify-center">
            <svg viewBox="0 0 18 14" className="w-[20px] h-[15px]"><path d="M5 1h8a4 6 0 0 1 4 6 4 6 0 0 1-4 6H5a4 6 0 0 1-4-6 4 6 0 0 1 4-6z" fill="#666" /><path d="M4.5 5l3 4M7.5 5l-3 4M10.5 5l3 4M13.5 5l-3 4" stroke="#eee" strokeWidth="1.2" /></svg>
          </span>
        </div>
      </div>
      <Taskbar />
    </div>
  );
}
